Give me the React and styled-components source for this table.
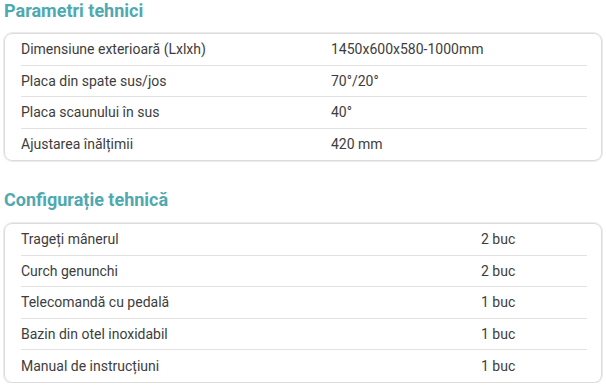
import React from 'react'
import styled, { createGlobalStyle } from 'styled-components'

const GlobalStyle = createGlobalStyle`
    body {
        margin: 0;
        background: #fff;
        font-family: Roboto, "Liberation Sans", Arial, sans-serif;
    }
`;

const Page = styled.div`
    width: 606px;
    padding: 0 4px;
    box-sizing: border-box;
    display: flex;
    flex-direction: column;
    gap: 28px;
`;

const Section = styled.section`
    display: flex;
    flex-direction: column;
`;

const Title = styled.h3`
    margin: 0 0 ${p => p.$space}px 0;
    font-size: 18px;
    line-height: 21px;
    font-weight: 700;
    color: #4fa9b1;
`;

const Card = styled.div`
    border: 1px solid #dcdcdc;
    border-radius: 8px;
    box-shadow: 0 0 0 1px #ececec;
    padding: 0 14px 0 16px;
`;

const Row = styled.div`
    display: grid;
    grid-template-columns: ${p => p.$labelWidth}px 1fr;
    align-items: center;
    height: 31.5px;
    box-sizing: border-box;
    border-bottom: 1px solid #e2e2e2;
    font-size: 14px;
    color: #3d3d3d;

    &:last-child {
        border-bottom: none;
    }
`;

const Cell = styled.span`
    white-space: nowrap;
`;

const parametri = [
    ['Dimensiune exterioară (Lxlxh)', '1450x600x580-1000mm'],
    ['Placa din spate sus/jos', '70°/20°'],
    ['Placa scaunului în sus', '40°'],
    ['Ajustarea înălțimii', '420 mm'],
]

const configuratie = [
    ['Trageți mânerul', '2 buc'],
    ['Curch genunchi', '2 buc'],
    ['Telecomandă cu pedală', '1 buc'],
    ['Bazin din otel inoxidabil', '1 buc'],
    ['Manual de instrucțiuni', '1 buc'],
]

const SpecTable = ({ title, rows, labelWidth, space }) => (
    <Section>
        <Title $space={space}>{title}</Title>
        <Card>
            {rows.map(([label, value]) => (
                <Row key={label} $labelWidth={labelWidth}>
                    <Cell>{label}</Cell>
                    <Cell>{value}</Cell>
                </Row>
            ))}
        </Card>
    </Section>
)

const App = () => {
    return (
        <>
            <GlobalStyle />
            <Page>
                <SpecTable title="Parametri tehnici" rows={parametri} labelWidth={310} space={12} />
                <SpecTable title="Configurație tehnică" rows={configuratie} labelWidth={460} space={13} />
            </Page>
        </>
    )
}

export default App
